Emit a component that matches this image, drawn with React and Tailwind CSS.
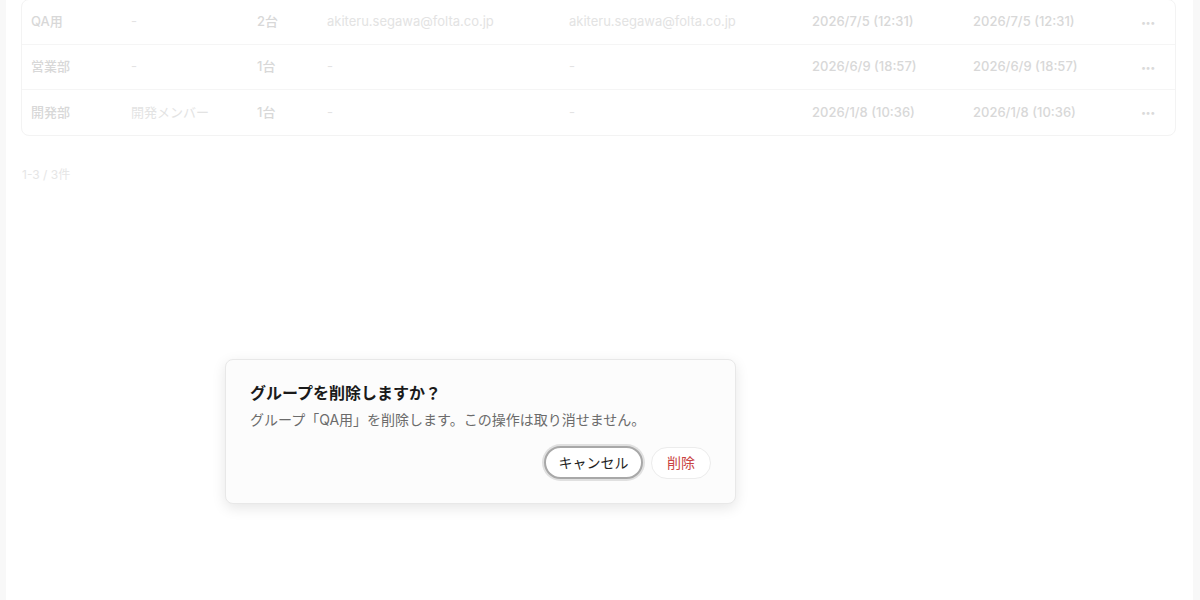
import React from "react";

const rows = [
  { name: "QA用", desc: "-", count: "2台", c1: "akiteru.segawa@folta.co.jp", c2: "akiteru.segawa@folta.co.jp", d1: "2026/7/5 (12:31)", d2: "2026/7/5 (12:31)" },
  { name: "営業部", desc: "-", count: "1台", c1: "-", c2: "-", d1: "2026/6/9 (18:57)", d2: "2026/6/9 (18:57)" },
  { name: "開発部", desc: "開発メンバー", count: "1台", c1: "-", c2: "-", d1: "2026/1/8 (10:36)", d2: "2026/1/8 (10:36)" },
];

export default function App() {
  return (
    <div
      className="w-[1200px] h-[600px] overflow-hidden flex bg-[#f9f9f9]"
      style={{ fontFamily: '"Helvetica Neue", Inter, "Noto Sans CJK JP", sans-serif' }}
    >
      <div className="w-[6px] shrink-0 bg-[#f8f8f8]" />
      <div className="flex-1 bg-white flex flex-col pl-[15px] pr-[17px]">
        <div className="-mt-[1px] border border-[#f3f3f3] rounded-[8px] flex flex-col">
          {rows.map((r, i) => (
            <div
              key={i}
              className={`h-[45px] flex items-center text-[13px] ${i < 2 ? "border-b border-[#f5f5f5]" : ""}`}
            >
              <div className="w-[109px] pl-[9px] text-[#d8d8d8] font-medium">{r.name}</div>
              <div className="w-[126px] text-[#e3e3e3]">{r.desc}</div>
              <div className="w-[70px] text-[#d8d8d8] font-medium">{r.count}</div>
              <div className="w-[242px] text-[#e3e3e3]">{r.c1}</div>
              <div className="w-[243px] text-[#e3e3e3]">{r.c2}</div>
              <div className="w-[161px] text-[#d8d8d8] font-medium">{r.d1}</div>
              <div className="w-[168px] text-[#d8d8d8] font-medium">{r.d2}</div>
              <div className="w-[20px] text-[#dadada] text-[9px] leading-none tracking-[-0.5px]">•••</div>
            </div>
          ))}
        </div>
        <div className="mt-[30px] text-[12px] text-[#e6e6e6] pl-[1px]">1-3 / 3件</div>
        <div className="mt-[175px] ml-[204px] w-[511px] h-[145px] rounded-[8px] border border-[#e8e8e8] bg-[#fcfcfc] shadow-[0_4px_14px_rgba(0,0,0,0.10)] px-6 pt-[21px] pb-6 flex flex-col">
          <div className="text-[16px] leading-[24px] font-bold text-[#1a1a1a]">グループを削除しますか？</div>
          <div className="mt-[5px] text-[14px] leading-[20px] text-[#6b6b6b]">グループ「QA用」を削除します。この操作は取り消せません。</div>
          <div className="mt-auto flex justify-end items-center gap-[8px]">
            <button className="h-[33px] w-[99px] rounded-full bg-white border-2 border-[#a8a8a8] ring-2 ring-[#e0e0e0] text-[14px] text-[#1f1f1f]">
              キャンセル
            </button>
            <button className="h-[32px] w-[60px] rounded-full bg-white border border-[#ececec] text-[14px] text-[#c94343]">
              削除
            </button>
          </div>
        </div>
      </div>
      <div className="w-[7px] shrink-0 bg-[#f8f8f8]" />
    </div>
  );
}
